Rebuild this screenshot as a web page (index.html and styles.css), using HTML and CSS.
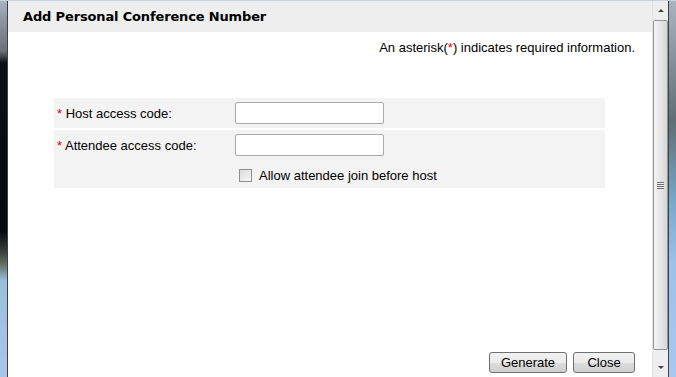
FILE: index.html
```html
<!doctype html>
<html>
    <head>
        <title>Add Personal Conference Number</title>
        <link rel="stylesheet" href="styles.css">
    </head>
    <body>
        <div class="win">
            <div class="frame frame-left"></div>
            <div class="dialog">
                <div class="title">Add Personal Conference Number</div>
                <div class="note">An asterisk(<span class="req">*</span>) indicates required information.</div>
                <div class="fields">
                    <div class="row">
                        <label class="label"><span class="req">*</span> Host access code:</label>
                        <div class="value"><input type="text" class="text"></div>
                    </div>
                    <div class="row">
                        <label class="label"><span class="req">*</span> Attendee access code:</label>
                        <div class="value">
                            <input type="text" class="text">
                            <label class="check"><span class="box"></span>Allow attendee join before host</label>
                        </div>
                    </div>
                </div>
                <div class="actions">
                    <button type="button" class="btn btn-gen">Generate</button>
                    <button type="button" class="btn btn-close">Close</button>
                </div>
            </div>
            <div class="scroll">
                <div class="arrow arrow-up"></div>
                <div class="thumb"><span class="grip"></span></div>
                <div class="arrow arrow-down"></div>
            </div>
            <div class="frame frame-right"></div>
        </div>
    </body>
</html>
```

FILE: styles.css
```css
* {
    box-sizing: border-box;
}
html,
body {
    margin: 0;
    padding: 0;
    height: 100%;
    background-color: #fff;
    color: #000;
}
body {
    font-family: "Liberation Sans", Arial, sans-serif;
    font-size: 13px;
    line-height: 15px;
}
.win {
    height: 377px;
    display: flex;
    border-top: 1px solid #c9d1dd;
}
.frame {
    width: 8px;
    flex-shrink: 0;
}
.frame-left {
    background: linear-gradient(to bottom, #aab4c0 0, #8f96a0 18px, #6c7078 50px, #0c1014 62px, #080a0c 230px, #383e3c 250px, #5c6a60 262px, #9cbede 280px, #a8c4e6 360px, #a8c4e6 100%);
    border-right: 1px solid #3c4048;
}
.frame-right {
    background: linear-gradient(to bottom, #aab4c0 0, #5f6e74 120px, #78a8c8 200px, #9cc0e8 260px, #a8c8ee 100%);
    border-left: 1px solid #3c4048;
}
.dialog {
    flex: 1;
    display: flex;
    flex-direction: column;
}
.title {
    background-color: #eeeeee;
    height: 31px;
    padding: 0 0 0 15px;
    display: flex;
    align-items: center;
    font-family: "DejaVu Sans", Verdana, sans-serif;
    font-weight: bold;
    font-size: 13px;
    letter-spacing: -0.15px;
}
.note {
    text-align: right;
    padding: 8px 17px 0 0;
    height: 66px;
}
.req {
    color: #e00000;
}
.fields {
    margin: 0 47px 0 46px;
    display: flex;
    flex-direction: column;
    gap: 2px;
}
.row {
    background-color: #f3f3f3;
    display: grid;
    grid-template-columns: 181px 1fr;
    padding: 4px 0;
}
.label {
    padding: 4px 0 0 3px;
}
.value {
    display: flex;
    flex-direction: column;
    align-items: flex-start;
}
.text {
    width: 149px;
    height: 22px;
    border: 1px solid #ababab;
    border-radius: 2px;
    margin: 0;
    background: #fff;
}
.check {
    display: flex;
    align-items: center;
    margin: 12px 0 1px 4px;
}
.box {
    width: 13px;
    height: 13px;
    border: 1px solid #8f8f8f;
    background: linear-gradient(135deg, #dcdcdc, #f6f6f6);
    margin-right: 7px;
}
.actions {
    margin-top: auto;
    display: flex;
    justify-content: flex-end;
    gap: 6px;
    padding: 0 17px 4px 0;
}
.btn {
    height: 21px;
    border: 1px solid #707070;
    border-radius: 3px;
    background: linear-gradient(to bottom, #f2f2f2 0, #ebebeb 50%, #dddddd 50%, #cfcfcf 100%);
    font-family: "Liberation Sans", Arial, sans-serif;
    font-size: 13px;
    color: #000;
    padding: 0;
}
.btn-gen {
    width: 78px;
}
.btn-close {
    width: 62px;
}
.scroll {
    width: 16px;
    flex-shrink: 0;
    background-color: #eeeeee;
    display: flex;
    flex-direction: column;
    border-left: 1px solid #e4e4e4;
}
.arrow {
    height: 19px;
    flex-shrink: 0;
    display: flex;
    align-items: center;
    justify-content: center;
}
.arrow::before {
    content: "";
    border-left: 3px solid transparent;
    border-right: 3px solid transparent;
}
.arrow-up::before {
    border-bottom: 3px solid #444;
}
.arrow-down::before {
    border-top: 3px solid #444;
}
.thumb {
    flex: 1;
    border: 1px solid #959595;
    border-radius: 2px;
    background: linear-gradient(to right, #f4f4f4 0, #e6e6e6 50%, #d6d6d6 100%);
    display: flex;
    align-items: center;
    justify-content: center;
    margin-bottom: 8px;
}
.grip {
    width: 7px;
    height: 7px;
    background: repeating-linear-gradient(to bottom, #6f6f6f 0, #6f6f6f 1px, #f2f2f2 1px, #f2f2f2 2px);
}
```
